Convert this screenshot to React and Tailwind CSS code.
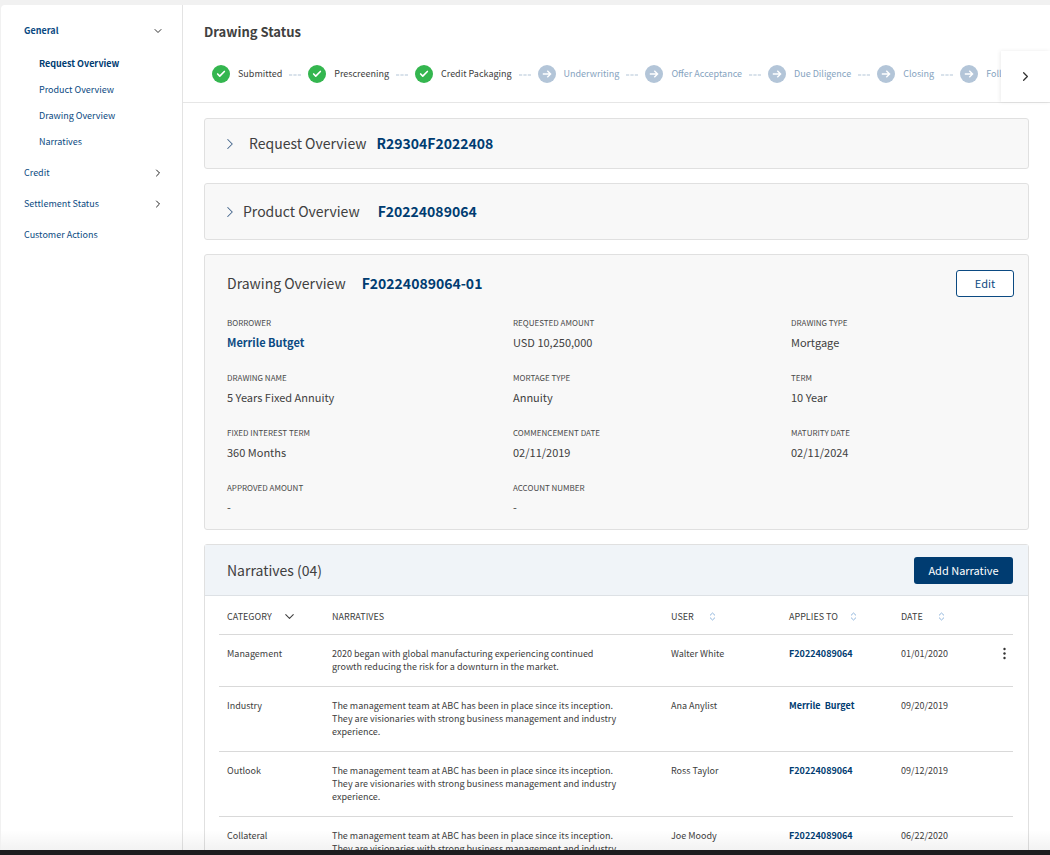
import { Check, ChevronDown, ChevronRight } from "lucide-react";

const NAV_ITEMS = [
  { label: "Request Overview", active: true },
  { label: "Product Overview" },
  { label: "Drawing Overview" },
  { label: "Narratives" },
];

const STEPS = [
  { label: "Submitted", done: true },
  { label: "Prescreening", done: true },
  { label: "Credit Packaging", done: true },
  { label: "Underwriting" },
  { label: "Offer Acceptance" },
  { label: "Due Diligence" },
  { label: "Closing" },
  { label: "Follow Up" },
];

const FIELDS = [
  { label: "BORROWER", value: "Merrile Butget", link: true },
  { label: "REQUESTED AMOUNT", value: "USD 10,250,000" },
  { label: "DRAWING TYPE", value: "Mortgage" },
  { label: "DRAWING NAME", value: "5 Years Fixed Annuity" },
  { label: "MORTAGE TYPE", value: "Annuity" },
  { label: "TERM", value: "10 Year" },
  { label: "FIXED INTEREST TERM", value: "360 Months" },
  { label: "COMMENCEMENT DATE", value: "02/11/2019" },
  { label: "MATURITY DATE", value: "02/11/2024" },
  { label: "APPROVED AMOUNT", value: "-" },
  { label: "ACCOUNT NUMBER", value: "-" },
];

const TEAM_TEXT =
  "The management team at ABC has been in place since its inception. They are visionaries with strong business management and industry experience.";

const NARRATIVES = [
  {
    category: "Management",
    text: "2020 began with global manufacturing experiencing continued growth reducing the risk for a downturn in the market.",
    user: "Walter White",
    appliesTo: "F20224089064",
    date: "01/01/2020",
    menu: true,
  },
  { category: "Industry", text: TEAM_TEXT, user: "Ana Anylist", appliesTo: "Merrile  Burget", date: "09/20/2019" },
  { category: "Outlook", text: TEAM_TEXT, user: "Ross Taylor", appliesTo: "F20224089064", date: "09/12/2019" },
  { category: "Collateral", text: TEAM_TEXT, user: "Joe Moody", appliesTo: "F20224089064", date: "06/22/2020" },
];

function Sidebar() {
  return (
    <nav className="w-[182px] shrink-0 border-r border-[#e3e3e3] pt-4 pr-[18px] pl-[23px] text-[9px] leading-5 text-[#0b4a82]">
      <button className="flex w-full items-center justify-between font-bold">
        General
        <ChevronDown size={12} className="text-[#333]" />
      </button>
      <ul className="mt-[13px] space-y-[6px] pl-[15px]">
        {NAV_ITEMS.map((item) => (
          <li key={item.label}>
            <a href="#" className={item.active ? "block font-bold text-[#003c71]" : "block"}>
              {item.label}
            </a>
          </li>
        ))}
      </ul>
      <div className="mt-[11px] space-y-[11px]">
        <button className="flex w-full items-center justify-between">
          Credit
          <ChevronRight size={12} className="text-[#222]" />
        </button>
        <button className="flex w-full items-center justify-between">
          Settlement Status
          <ChevronRight size={12} className="text-[#222]" />
        </button>
        <a href="#" className="block">
          Customer Actions
        </a>
      </div>
    </nav>
  );
}

function StepIcon({ done }) {
  if (done) {
    return (
      <span className="flex size-[18px] items-center justify-center rounded-full bg-[#34b64f] text-white">
        <Check size={10} strokeWidth={4} />
      </span>
    );
  }
  return (
    <span className="flex size-[18px] items-center justify-center rounded-full bg-[#b3c5d8] text-white">
      <svg width="10" height="10" viewBox="0 0 10 10" fill="none" stroke="currentColor" strokeWidth="1.4">
        <path d="M0.8 5H8.6M5.3 1.7L8.6 5L5.3 8.3" />
      </svg>
    </span>
  );
}

function Stepper() {
  return (
    <div className="flex h-[51px] items-stretch">
      <ol className="flex min-w-0 flex-1 items-center overflow-hidden pb-[6px] pl-[29px] text-[9px] whitespace-nowrap">
        {STEPS.map((step, i) => (
          <li key={step.label} className="flex shrink-0 items-center">
            <StepIcon done={step.done} />
            <span className={step.done ? "ml-2 text-[#404040]" : "ml-2 text-[#86a3c0]"}>{step.label}</span>
            {i < STEPS.length - 1 && (
              <svg width="12" height="2" viewBox="0 0 12 2" className="mx-[7px] mt-[2px]">
                <path d="M0 1H12" stroke="#b3c5d8" strokeWidth="1.2" strokeDasharray="3.2 1.2" />
              </svg>
            )}
          </li>
        ))}
      </ol>
      <button
        aria-label="Next steps"
        className="flex w-[49px] items-center justify-center bg-white text-[#333] shadow-[-1px_0_4px_rgba(0,0,0,0.08)]"
      >
        <ChevronRight size={15} />
      </button>
    </div>
  );
}

function SortIcon() {
  return (
    <svg width="7" height="9" viewBox="0 0 7 9" fill="none" stroke="#8fb5dd" strokeWidth="1">
      <path d="M1 3.4L3.5 1L6 3.4M1 5.6L3.5 8L6 5.6" />
    </svg>
  );
}

function CollapsedCard({ title, id, className, idClass }) {
  return (
    <section className="rounded-[3px] border border-[#e0e0e0] bg-[#f8f8f8]">
      <button className={`flex w-full items-center pl-4 text-[14px] ${className}`}>
        <ChevronRight size={18} strokeWidth={1.4} className="text-[#44658c]" />
        <span>{title}</span>
        <span className={`font-bold text-[#003c71] ${idClass}`}>{id}</span>
      </button>
    </section>
  );
}

function DrawingCard() {
  return (
    <section className="rounded-[3px] border border-[#e0e0e0] bg-[#f8f8f8] pr-[14px] pb-3 pl-[22px]">
      <header className="mb-0.5 flex h-14 items-center justify-between">
        <h2 className="text-[14px]">
          Drawing Overview
          <a href="#" className="ml-4 font-bold text-[#003c71]">
            F20224089064-01
          </a>
        </h2>
        <button className="h-[27px] w-[58px] rounded-[3px] border border-[#0b4a82] bg-white text-[11px] text-[#0b4a82]">
          Edit
        </button>
      </header>
      <dl className="grid grid-cols-[286fr_278fr_223fr] gap-y-4">
        {FIELDS.map((field) => (
          <div key={field.label}>
            <dt className="text-[8px] leading-5 text-[#4a4a4a]">{field.label}</dt>
            <dd className="text-[11px] leading-[19px]">
              {field.link ? (
                <a href="#" className="font-bold text-[#0b4a82]">
                  {field.value}
                </a>
              ) : (
                field.value
              )}
            </dd>
          </div>
        ))}
      </dl>
    </section>
  );
}

function NarrativesCard() {
  return (
    <section className="rounded-t-[3px] border border-[#e0e0e0]">
      <header className="flex h-[51px] items-center justify-between border-b border-[#dde1e5] bg-[#f0f4f8] pr-[15px] pl-[22px]">
        <h2 className="text-[14px]">Narratives (04)</h2>
        <button className="h-[27px] w-[99px] rounded-[3px] bg-[#003c71] text-[11px] text-white">Add Narrative</button>
      </header>
      <div className="pr-[15px] pl-[14px]">
        <table className="w-full table-fixed text-left text-[9px] leading-[13px]">
          <colgroup>
            <col className="w-[113px]" />
            <col />
            <col className="w-[118px]" />
            <col className="w-[112px]" />
            <col className="w-[88px]" />
            <col className="w-6" />
          </colgroup>
          <thead>
            <tr className="h-[38px] border-b border-[#d9d9d9] [&_th]:pt-1 [&_th]:font-normal">
              <th className="pl-2">
                <button className="flex items-center gap-[10px]">
                  CATEGORY <ChevronDown size={15} strokeWidth={1.7} />
                </button>
              </th>
              <th>NARRATIVES</th>
              <th>
                <button className="flex items-center gap-[15px]">
                  USER <SortIcon />
                </button>
              </th>
              <th>
                <button className="flex items-center gap-3">
                  APPLIES TO <SortIcon />
                </button>
              </th>
              <th>
                <button className="flex items-center gap-[15px]">
                  DATE <SortIcon />
                </button>
              </th>
              <th aria-label="Actions" />
            </tr>
          </thead>
          <tbody>
            {NARRATIVES.map((row) => (
              <tr key={row.category} className="border-b border-[#d9d9d9] align-top [&>td]:pt-3 [&>td]:pb-[13px]">
                <td className="pl-2">{row.category}</td>
                <td>
                  <p className="mr-12">{row.text}</p>
                </td>
                <td>{row.user}</td>
                <td>
                  <a href="#" className="font-bold whitespace-pre text-[#003c71]">
                    {row.appliesTo}
                  </a>
                </td>
                <td>{row.date}</td>
                <td>
                  {row.menu && (
                    <button aria-label="Row actions" className="ml-auto flex w-[17px] justify-center">
                      <svg width="3" height="13" viewBox="0 0 3 13" fill="#333">
                        <circle cx="1.5" cy="2" r="1.2" />
                        <circle cx="1.5" cy="6.5" r="1.2" />
                        <circle cx="1.5" cy="11" r="1.2" />
                      </svg>
                    </button>
                  )}
                </td>
              </tr>
            ))}
          </tbody>
        </table>
      </div>
    </section>
  );
}

export default function App() {
  return (
    <div className="flex h-screen flex-col overflow-hidden bg-[#f1f1f1] font-['Noto_Sans_CJK_SC',sans-serif] text-[#404040]">
      <div className="relative mt-[5px] ml-px flex min-h-0 flex-1 overflow-hidden rounded-tl-[4px] bg-white">
        <Sidebar />
        <main className="min-w-0 flex-1">
          <header className="border-b border-[#e6e6e6]">
            <h1 className="px-[21px] pt-[15px] pb-[7px] text-[13px] leading-6 font-bold">Drawing Status</h1>
            <Stepper />
          </header>
          <div className="flex flex-col gap-[14px] px-[21px] pt-[15px]">
            <CollapsedCard
              title="Request Overview"
              id="R29304F2022408"
              className="h-[49px] gap-[10px]"
              idClass=""
            />
            <CollapsedCard
              title="Product Overview"
              id="F20224089064"
              className="h-[55px] gap-1"
              idClass="ml-[14px]"
            />
            <DrawingCard />
            <NarrativesCard />
          </div>
        </main>
        <div className="pointer-events-none absolute inset-x-0 bottom-0 h-5 bg-linear-to-b from-transparent to-black/5" />
      </div>
      <div className="h-[5px] shrink-0 bg-[#1d1c1e]" />
    </div>
  );
}
